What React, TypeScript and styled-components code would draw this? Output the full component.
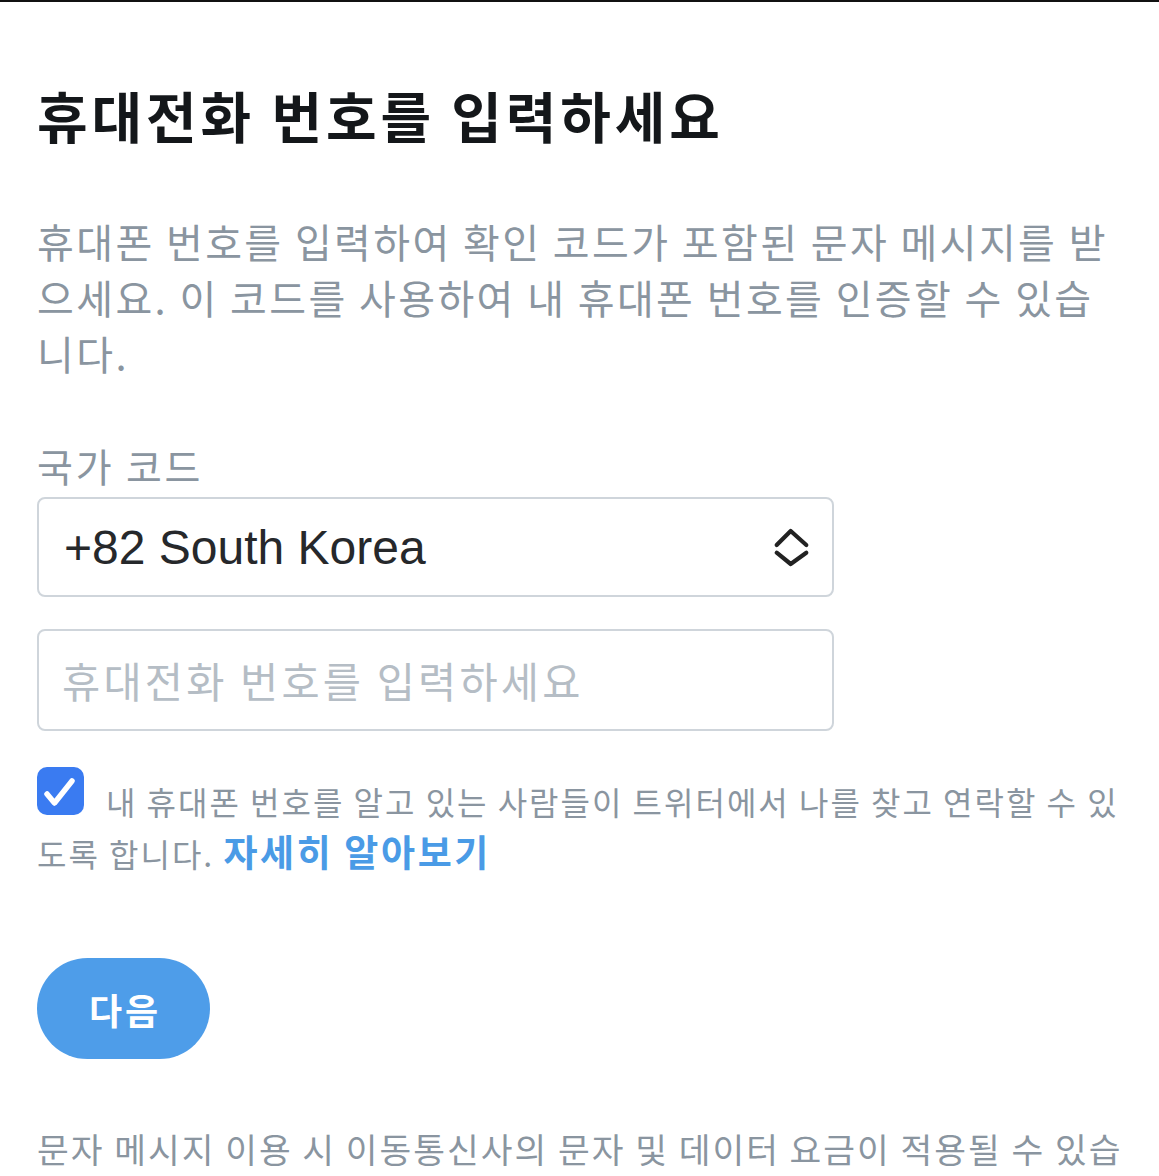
import React, { useState } from "react";
import styled, { createGlobalStyle } from "styled-components";

const Colors = {
  black: "#14171a",
  text: "#26282b",
  grey: "#8a95a0",
  placeholder: "#b5bdc5",
  border: "#cfd5db",
  checkBlue: "#3a7bf1",
  linkBlue: "#4a9be6",
  buttonBlue: "#4e9de9",
  white: "#ffffff",
};

const GlobalStyle = createGlobalStyle`
  body {
    margin: 0;
    background: ${Colors.white};
    font-family: "Noto Sans CJK KR", "Noto Sans", sans-serif;
  }
`;

const Page = styled.main`
  border-top: 2px solid #111;
  padding: 79px 32px 0 37px;
  min-height: 1176px;
  box-sizing: border-box;
  overflow: hidden;
`;

const Title = styled.h1`
  margin: 0;
  font-size: 55px;
  line-height: 66px;
  font-weight: 700;
  letter-spacing: 3.9px;
  color: ${Colors.black};
`;

const Description = styled.p<{ $size: number; $top: number; $spacing: number }>`
  margin: ${(p) => p.$top}px 0 0;
  font-size: ${(p) => p.$size}px;
  line-height: 56px;
  letter-spacing: ${(p) => p.$spacing}px;
  color: ${Colors.grey};
  word-break: break-all;
`;

const FieldLabel = styled.label`
  display: block;
  margin-top: 59px;
  font-size: 39px;
  line-height: 50px;
  letter-spacing: 2.8px;
  color: ${Colors.grey};
`;

const SelectBox = styled.div`
  margin-top: 7px;
  width: 797px;
  height: 100px;
  box-sizing: border-box;
  border: 2px solid ${Colors.border};
  border-radius: 8px;
  padding: 0 22px 0 25px;
  display: flex;
  align-items: center;
  justify-content: space-between;
  cursor: pointer;
`;

const SelectValue = styled.span`
  font-family: "Liberation Sans", Arial, sans-serif;
  font-size: 48px;
  color: ${Colors.text};
`;

const PhoneInput = styled.input`
  display: block;
  margin-top: 32px;
  width: 797px;
  height: 102px;
  box-sizing: border-box;
  border: 2px solid ${Colors.border};
  border-radius: 8px;
  padding: 0 0 0 23px;
  font-family: "Noto Sans CJK KR", sans-serif;
  font-size: 41.5px;
  letter-spacing: 3.2px;
  color: ${Colors.text};
  outline: none;

  &::placeholder {
    color: ${Colors.placeholder};
  }
`;

const ConsentText = styled.p`
  margin: 44px 0 0;
  font-size: 32px;
  line-height: 52px;
  letter-spacing: 2px;
  color: ${Colors.grey};
  word-break: break-all;
`;

const CheckBox = styled.span<{ $checked: boolean }>`
  display: inline-block;
  vertical-align: top;
  width: 47px;
  height: 48px;
  margin: -8px 22px 0 0;
  border-radius: 10px;
  background: ${(p) => (p.$checked ? Colors.checkBlue : Colors.white)};
  border: ${(p) => (p.$checked ? "none" : `2px solid ${Colors.border}`)};
  box-sizing: border-box;
  cursor: pointer;

  svg {
    display: block;
  }
`;

const LearnMore = styled.a`
  font-size: 37px;
  line-height: 1;
  font-weight: 700;
  letter-spacing: 2.6px;
  color: ${Colors.linkBlue};
  text-decoration: none;
`;

const NextButton = styled.button`
  display: block;
  margin-top: 79px;
  width: 173px;
  height: 101px;
  border: none;
  border-radius: 51px;
  background: ${Colors.buttonBlue};
  color: ${Colors.white};
  font-family: "Noto Sans CJK KR", sans-serif;
  font-size: 36px;
  font-weight: 700;
  letter-spacing: 3px;
  text-indent: 3px;
  cursor: pointer;
`;

const Chevrons = () => (
  <svg width="37" height="39" viewBox="0 0 37 39" fill="none">
    <path
      d="M3.7 17 L17.7 3 L33.3 17 M3.7 24.7 L17.7 36 L33.3 24.7"
      stroke="#222"
      strokeWidth="4.2"
      strokeLinecap="round"
      strokeLinejoin="round"
    />
  </svg>
);

export default function App() {
  const [checked, setChecked] = useState(true);
  const [phone, setPhone] = useState("");

  return (
    <>
      <GlobalStyle />
      <Page>
        <Title>휴대전화 번호를 입력하세요</Title>
        <Description $size={40} $top={66} $spacing={2.4}>
          휴대폰 번호를 입력하여 확인 코드가 포함된 문자 메시지를 받으세요. 이
          코드를 사용하여 내 휴대폰 번호를 인증할 수 있습니다.
        </Description>

        <FieldLabel>국가 코드</FieldLabel>
        <SelectBox role="button">
          <SelectValue>+82 South Korea</SelectValue>
          <Chevrons />
        </SelectBox>

        <PhoneInput
          placeholder="휴대전화 번호를 입력하세요"
          value={phone}
          onChange={(e) => setPhone(e.target.value)}
        />

        <ConsentText>
          <CheckBox
            $checked={checked}
            role="checkbox"
            aria-checked={checked}
            onClick={() => setChecked(!checked)}
          >
            {checked && (
              <svg width="47" height="48" viewBox="0 0 47 48" fill="none">
                <path
                  d="M10 27 L17.5 36 L35 14"
                  stroke="#fff"
                  strokeWidth="5.5"
                  strokeLinecap="round"
                  strokeLinejoin="round"
                />
              </svg>
            )}
          </CheckBox>
          내 휴대폰 번호를 알고 있는 사람들이 트위터에서 나를 찾고 연락할 수
          있도록 합니다. <LearnMore href="#">자세히 알아보기</LearnMore>
        </ConsentText>

        <NextButton>다음</NextButton>

        <Description $size={34.5} $top={61} $spacing={2}>
          문자 메시지 이용 시 이동통신사의 문자 및 데이터 요금이 적용될 수
          있습니다.
        </Description>
      </Page>
    </>
  );
}
